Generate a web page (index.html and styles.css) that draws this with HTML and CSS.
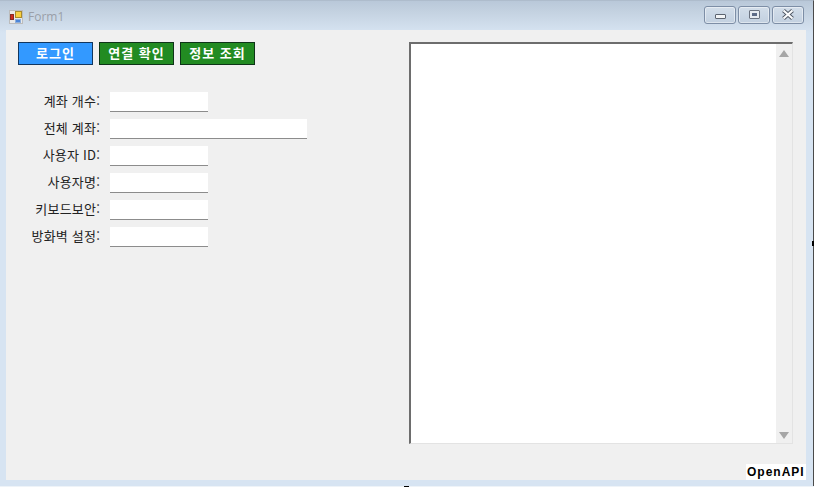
FILE: index.html
```html
<!DOCTYPE html>
<html lang="ko">
<head>
    <meta charset="UTF-8">
    <meta name="viewport" content="width=device-width, initial-scale=1.0">
    <title>Form1</title>
    <link rel="stylesheet" href="styles.css">
</head>
<body>
    <div class="window">
        <div class="titlebar">
            <svg class="app-icon" width="14" height="14" viewBox="0 0 14 14">
                <rect x="0.5" y="0.5" width="13" height="13" fill="#e9e9e9" stroke="#bcbcbc"/>
                <rect x="6.5" y="1.5" width="6" height="6" fill="#f9d03f" stroke="#a98a2c"/>
                <rect x="1.5" y="4.5" width="3" height="5" fill="#cf2a1e" stroke="#8a2a20"/>
                <rect x="6.5" y="9.5" width="5" height="3" fill="#4d86d8" stroke="#8fb0dc"/>
            </svg>
            <span class="title">Form1</span>
            <div class="controls">
                <button class="ctl" aria-label="minimize"><span class="ctl-min"></span></button>
                <button class="ctl" aria-label="maximize"><span class="ctl-max"></span></button>
                <button class="ctl" aria-label="close">
                    <svg width="14" height="11" viewBox="0 0 14 11">
                        <path d="M2.5 1.5 L11.5 9.5 M11.5 1.5 L2.5 9.5" stroke="#4e5662" stroke-width="4"/>
                        <path d="M2.5 1.5 L11.5 9.5 M11.5 1.5 L2.5 9.5" stroke="#fbfcfd" stroke-width="2.2"/>
                    </svg>
                </button>
            </div>
        </div>

        <div class="content">
            <div class="main">
                <div class="left">
                    <div class="actions">
                        <button class="btn btn-blue">로그인</button>
                        <button class="btn btn-green">연결 확인</button>
                        <button class="btn btn-green">정보 조회</button>
                    </div>
                    <div class="fields">
                        <div class="field"><label>계좌 개수:</label><input class="box" type="text"></div>
                        <div class="field"><label>전체 계좌:</label><input class="box box-wide" type="text"></div>
                        <div class="field"><label>사용자 ID:</label><input class="box" type="text"></div>
                        <div class="field"><label>사용자명:</label><input class="box" type="text"></div>
                        <div class="field"><label>키보드보안:</label><input class="box" type="text"></div>
                        <div class="field"><label>방화벽 설정:</label><input class="box" type="text"></div>
                    </div>
                </div>
                <div class="output">
                    <div class="output-text"></div>
                    <div class="scrollbar">
                        <span class="arrow-up"></span>
                        <span class="arrow-down"></span>
                    </div>
                </div>
            </div>
            <div class="footer"><span class="openapi">OpenAPI</span></div>
        </div>
    </div>
    <span class="notch notch-right"></span>
    <span class="notch notch-bottom"></span>
</body>
</html>
```

FILE: styles.css
```css
* {
    margin: 0;
    padding: 0;
    box-sizing: border-box;
}

html, body {
    height: 100%;
    overflow: hidden;
}

body {
    font-family: "Noto Sans CJK KR", "Liberation Sans", sans-serif;
    background: #eef3f8;
}

.window {
    height: 486px;
    width: 814px;
    display: flex;
    flex-direction: column;
    padding: 0 7px 6px 6px;
    background: linear-gradient(180deg, #b9c8d9 0%, #c3d1e0 10px, #d7e4f2 32px);
    border-top: 1px solid #aebccc;
    border-right: 1px solid #4a4a4a;
}

.titlebar {
    height: 29px;
    flex: none;
    display: flex;
    align-items: center;
    padding: 2px 2px 0 3px;
}

.app-icon {
    margin-right: 5px;
}

.title {
    font-family: "Open Sans", "Liberation Sans", sans-serif;
    font-size: 12px;
    color: #9a9fa8;
}

.controls {
    margin-left: auto;
    display: flex;
    gap: 2px;
    margin-top: -4px;
}

.ctl {
    width: 32px;
    height: 18px;
    border: 1px solid #7d8ea6;
    border-radius: 3px;
    background: linear-gradient(180deg, #d3deea 0%, #c2d0e0 100%);
    box-shadow: inset 0 0 0 1px rgba(255, 255, 255, 0.45);
    display: flex;
    align-items: center;
    justify-content: center;
}

.ctl-min {
    display: block;
    width: 11px;
    height: 5px;
    margin-top: 4px;
    background: #f2f4f6;
    border: 1px solid #5c6470;
    border-radius: 1px;
}

.ctl-max {
    display: block;
    width: 11px;
    height: 9px;
    background: #5c6a86;
    border: 3px solid #e6eaf0;
    outline: 1px solid #6a7280;
    outline-offset: -1px;
    border-radius: 1px;
}

.content {
    flex: 1;
    background: #f0f0f0;
    display: flex;
    flex-direction: column;
}

.main {
    flex: 1;
    display: flex;
    padding: 12px 13px 0 12px;
}

.left {
    width: 391px;
    flex: none;
}

.actions {
    display: flex;
    gap: 6px;
}

.btn {
    width: 75px;
    height: 23px;
    padding-bottom: 5px;
    border: 1px solid #0e3418;
    color: #fff;
    font-family: inherit;
    font-size: 13px;
    font-weight: 700;
    letter-spacing: 1px;
}

.btn-blue {
    background: #3399ff;
    border-color: #12365e;
}

.btn-green {
    background: #228b22;
}

.fields {
    margin-top: 27px;
    display: flex;
    flex-direction: column;
    gap: 7px;
}

.field {
    display: flex;
    align-items: center;
    height: 20px;
}

.field label {
    width: 82px;
    padding-bottom: 4px;
    text-align: right;
    font-size: 13px;
    letter-spacing: 0.2px;
    color: #222;
    margin-right: 10px;
    white-space: nowrap;
}

.box {
    width: 98px;
    height: 20px;
    border: none;
    border-bottom: 1px solid #8c8c8c;
    background: #fff;
}

.box-wide {
    width: 197px;
}

.output {
    width: 384px;
    height: 402px;
    flex: none;
    display: flex;
    background: #fff;
    border-top: 2px solid #6d6d6d;
    border-left: 2px solid #6d6d6d;
    border-right: 1px solid #e3e3e3;
    border-bottom: 1px solid #e3e3e3;
}

.output-text {
    flex: 1;
}

.scrollbar {
    width: 16px;
    background: #f0f0f0;
    display: flex;
    flex-direction: column;
    justify-content: space-between;
    align-items: center;
    padding: 6px 0 4px;
}

.arrow-up {
    border-left: 5px solid transparent;
    border-right: 5px solid transparent;
    border-bottom: 7px solid #a6a6a6;
}

.arrow-down {
    border-left: 5px solid transparent;
    border-right: 5px solid transparent;
    border-top: 7px solid #a6a6a6;
}

.footer {
    display: flex;
    justify-content: flex-end;
}

.openapi {
    width: 60px;
    height: 16px;
    padding-left: 1px;
    background: #fff;
    color: #000;
    font-family: "Liberation Sans", sans-serif;
    font-size: 12px;
    font-weight: 700;
    letter-spacing: 1px;
    line-height: 16px;
}

.notch {
    position: absolute;
    background: #000;
}

.notch-right {
    top: 241px;
    right: 0;
    width: 2px;
    height: 5px;
}

.notch-bottom {
    top: 486px;
    left: 404px;
    width: 5px;
    height: 1px;
}
```
